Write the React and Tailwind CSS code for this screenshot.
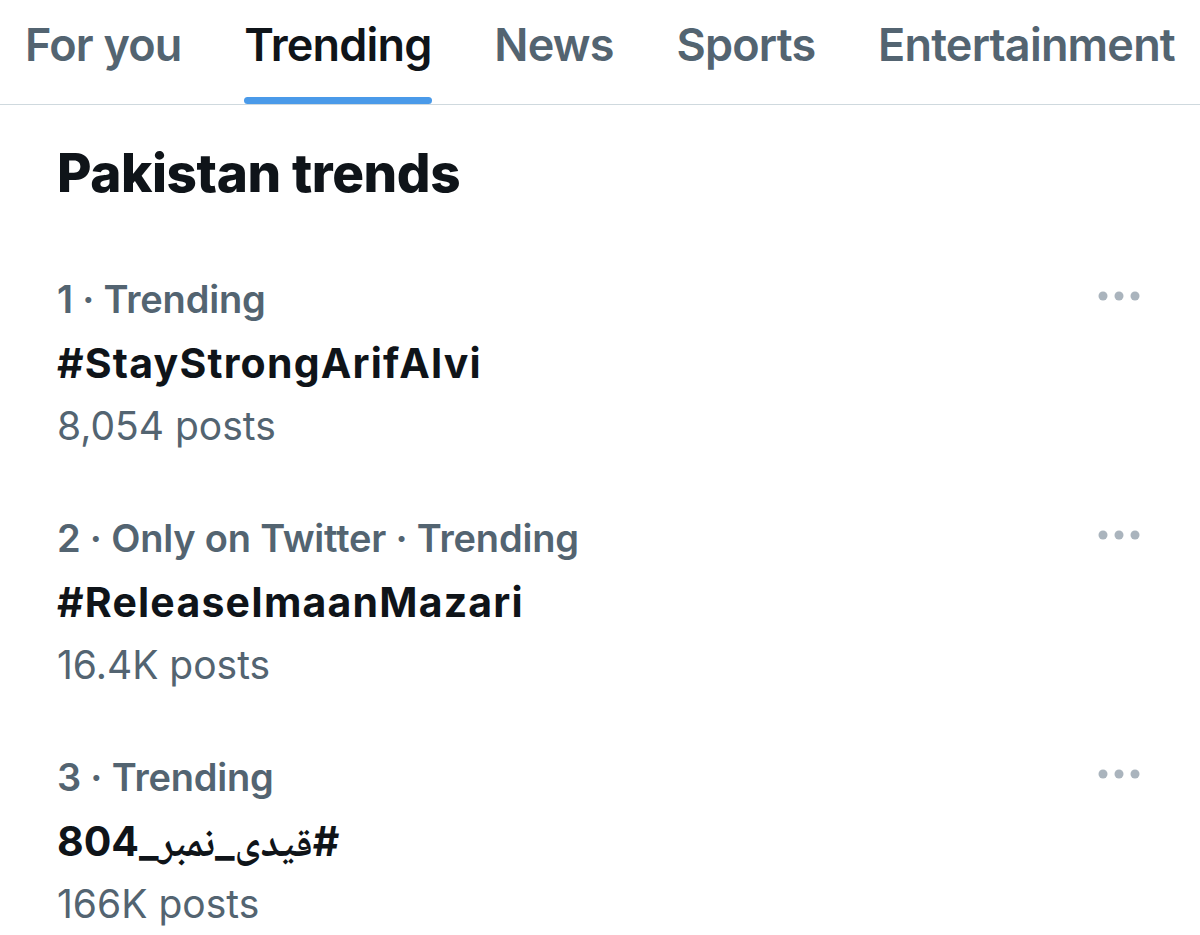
import React from "react";

const tabs = ["For you", "Trending", "News", "Sports", "Entertainment"];

const trends = [
  { meta: "1 · Trending", tag: "#StayStrongArifAlvi", posts: "8,054 posts" },
  { meta: "2 · Only on Twitter · Trending", tag: "#ReleaseImaanMazari", posts: "16.4K posts" },
  { meta: "3 · Trending", tag: "#قیدی_نمبر_804", posts: "166K posts", rtl: true },
];

function Dots() {
  return (
    <svg width="42" height="10" viewBox="0 0 42 10">
      <circle cx="5" cy="5" r="4.5" fill="#aab4bd" />
      <circle cx="21" cy="5" r="4.5" fill="#aab4bd" />
      <circle cx="37" cy="5" r="4.5" fill="#aab4bd" />
    </svg>
  );
}

export default function App() {
  return (
    <div
      className="w-[1200px] h-[935px] bg-white overflow-hidden"
      style={{ fontFamily: "Inter, 'Noto Sans', sans-serif" }}
    >
      <div className="flex justify-between px-[25px] h-[105px] border-b border-[#cfd9de]">
        {tabs.map((t) => (
          <div key={t} className="flex flex-col justify-between h-full">
            <div
              className={
                "pt-[18px] text-[45px] leading-[54px] font-semibold tracking-[-0.8px] " +
                (t === "Trending" ? "text-[#0f1419]" : "text-[#536471]")
              }
            >
              {t}
            </div>
            {t === "Trending" ? (
              <div className="h-[7px] rounded-full bg-[#4a9ae9]" />
            ) : (
              <div className="h-[7px]" />
            )}
          </div>
        ))}
      </div>
      <div className="px-[57px]">
        <div className="pt-[36px] pb-[62px] text-[53px] leading-[64px] font-extrabold text-[#0f1419] tracking-[-0.4px]">
          Pakistan trends
        </div>
        <div className="flex flex-col">
          {trends.map((tr) => (
            <div key={tr.tag} className="flex justify-between h-[239px]">
              <div className="flex flex-col">
                <div className="text-[38px] leading-[64px] font-semibold text-[#536471] tracking-[-0.2px]">
                  {tr.meta}
                </div>
                <div
                  className="text-[41px] leading-[64px] font-bold text-[#0f1419] tracking-[1.2px]"
                  style={tr.rtl ? { fontFamily: "Inter, 'Noto Naskh Arabic', 'DejaVu Sans', sans-serif" } : undefined}
                  dir={tr.rtl ? "rtl" : undefined}
                >
                  {tr.tag}
                </div>
                <div className="text-[39px] leading-[62px] font-normal text-[#536471]">
                  {tr.posts}
                </div>
              </div>
              <div className="pr-[3px] pt-[24px]">
                <Dots />
              </div>
            </div>
          ))}
        </div>
      </div>
    </div>
  );
}
